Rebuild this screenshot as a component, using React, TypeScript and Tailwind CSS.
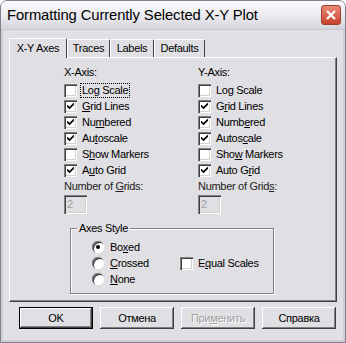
import React from 'react'

const font = "font-['Liberation_Sans',Arial,sans-serif]"
const sunken =
  'shadow-[inset_1px_1px_0_#808080,inset_2px_2px_0_#404040,inset_-1px_-1px_0_#ffffff,inset_-2px_-2px_0_#d4d0c8]'
const raised =
  'shadow-[inset_-1px_-1px_0_#404040,inset_1px_1px_0_#ffffff,inset_-2px_-2px_0_#808080]'

function Label({ text, u, focus }: { text: string; u: number; focus?: boolean }) {
  return (
    <span className={focus ? 'outline outline-1 outline-dotted outline-black px-[1px] -mx-[1px] leading-[13px]' : 'leading-[13px]'}>
      {text.slice(0, u)}
      <span className="underline underline-offset-[1px]">{text[u]}</span>
      {text.slice(u + 1)}
    </span>
  )
}

function Check({ checked }: { checked?: boolean }) {
  return (
    <div className={`w-[13px] h-[13px] bg-white shrink-0 flex items-center justify-center ${sunken}`}>
      {checked && (
        <svg width="7" height="7" viewBox="0 0 7 7">
          <path d="M0 2.5 L2.5 5 L7 0.5" stroke="#000" strokeWidth="1.7" fill="none" />
        </svg>
      )}
    </div>
  )
}

function CheckRow({ text, u, checked, focus }: { text: string; u: number; checked?: boolean; focus?: boolean }) {
  return (
    <div className="h-[16px] flex items-center gap-[5px]">
      <Check checked={checked} />
      <Label text={text} u={u} focus={focus} />
    </div>
  )
}

function Radio({ text, u, on }: { text: string; u: number; on?: boolean }) {
  return (
    <div className="h-[16px] flex items-center gap-[6px]">
      <div className="w-[12px] h-[12px] rounded-full bg-white shrink-0 flex items-center justify-center shadow-[inset_1px_1px_0_#808080,inset_2px_2px_0_#404040,inset_-1px_-1px_0_#ffffff]">
        {on && <div className="w-[4px] h-[4px] rounded-full bg-black" />}
      </div>
      <Label text={text} u={u} />
    </div>
  )
}

function AxisColumn({ title, rows, gridU }: { title: string; rows: [string, number, boolean, boolean?][]; gridU: number }) {
  return (
    <div className="w-[134px] flex flex-col">
      <div className="h-[13px] leading-[13px] mb-[3px]">{title}</div>
      {rows.map(([t, u, c, f]) => (
        <CheckRow key={t} text={t} u={u} checked={c} focus={f} />
      ))}
      <div className="mt-[2px] h-[13px] leading-[13px] text-[#222]">
        <Label text="Number of Grids:" u={gridU} />
      </div>
      <div className={`mt-[2px] w-[23px] h-[19px] pl-[3px] text-[#a0a0a0] leading-[19px] ${sunken}`}>2</div>
    </div>
  )
}

function Btn({ children, def, disabled }: { children: React.ReactNode; def?: boolean; disabled?: boolean }) {
  return (
    <div className={`w-[74px] h-[22px] ${def ? 'border border-black' : ''}`}>
      <div
        className={`w-full h-full flex items-center justify-center ${raised} ${
          disabled ? 'text-[#a0a0a0] [text-shadow:1px_1px_0_#ffffff]' : 'text-black'
        }`}
      >
        {children}
      </div>
    </div>
  )
}

const tabs: [string, string][] = [
  ['Traces', 'w-[43px]'],
  ['Labels', 'w-[44px]'],
  ['Defaults', 'w-[51px]'],
]

export default function App() {
  return (
    <div className={`w-[346px] h-[343px] bg-[#e0dfe3] ${font} text-[11px] tracking-[-0.3px] text-black border border-[#7f7f8f] rounded-t-[7px] flex flex-col overflow-hidden`}>
      {/* title bar */}
      <div className="h-[29px] shrink-0 flex items-center justify-between pl-[6px] pr-[4px] bg-gradient-to-b from-[#fbfbfc] via-[#ececf0] to-[#d4d4dc] border-b border-[#c8c8d0]">
        <span className="text-[14.8px] tracking-[-0.1px] text-black">Formatting Currently Selected X-Y Plot</span>
        <div className="w-[20px] h-[20px] rounded-[3px] border border-[#a03c30] bg-gradient-to-b from-[#e88a78] to-[#c8402c] flex items-center justify-center">
          <svg width="10" height="10" viewBox="0 0 10 10">
            <path d="M1 1 L9 9 M9 1 L1 9" stroke="#fff" strokeWidth="2.2" />
          </svg>
        </div>
      </div>

      {/* body */}
      <div className="flex-1 flex flex-col px-[6px] pt-[7px] border-x-[2px] border-b-[2px] border-[#d0cfd6]">
        {/* tabs */}
        <div className="flex items-end h-[20px] relative z-10">
          <div className="w-[58px] h-[20px] flex items-center justify-center bg-[#e0dfe3] border-t border-l border-white border-r border-r-[#404040] rounded-t-[2px] -mb-px pb-[1px]">
            X-Y Axes
          </div>
          {tabs.map(([t, w]) => (
            <div key={t} className={`${w} h-[18px] flex items-center justify-center border-t border-l border-white border-r border-r-[#404040] rounded-t-[2px]`}>
              {t}
            </div>
          ))}
        </div>
        {/* panel */}
        <div className="h-[245px] border-t border-l border-white border-r border-b border-r-[#404040] border-b-[#404040] shadow-[inset_-1px_-1px_0_#808080] flex flex-col">
          <div className="flex pl-[54px] pt-[8px]">
            <AxisColumn
              title="X-Axis:"
              gridU={10}
              rows={[
                ['Log Scale', 2, false, true],
                ['Grid Lines', 0, true],
                ['Numbered', 2, true],
                ['Autoscale', 2, true],
                ['Show Markers', 1, false],
                ['Auto Grid', 1, true],
              ]}
            />
            <AxisColumn
              title="Y-Axis:"
              gridU={14}
              rows={[
                ['Log Scale', 2, false],
                ['Grid Lines', 1, true],
                ['Numbered', 4, true],
                ['Autoscale', 5, true],
                ['Show Markers', 3, false],
                ['Auto Grid', 6, true],
              ]}
            />
          </div>
          {/* group box */}
          <div className="ml-[60px] mt-[14px] w-[204px] h-[66px] border border-[#808080] shadow-[1px_1px_0_#ffffff,inset_1px_1px_0_#ffffff] relative">
            <span className="absolute -top-[7px] left-[6px] px-[2px] bg-[#e0dfe3] leading-[13px]">Axes Style</span>
            <div className="flex pl-[21px] pt-[10px]">
              <div className="flex flex-col w-[88px]">
                <Radio text="Boxed" u={2} on />
                <Radio text="Crossed" u={0} />
                <Radio text="None" u={0} />
              </div>
              <div className="flex flex-col pt-[16px]">
                <CheckRow text="Equal Scales" u={1} />
              </div>
            </div>
          </div>
        </div>
        {/* buttons */}
        <div className="flex gap-[7px] pl-[10px] pt-[5px]">
          <Btn def>OK</Btn>
          <Btn>Отмена</Btn>
          <Btn disabled>
            <Label text="Применить" u={3} />
          </Btn>
          <Btn>Справка</Btn>
        </div>
      </div>
    </div>
  )
}
